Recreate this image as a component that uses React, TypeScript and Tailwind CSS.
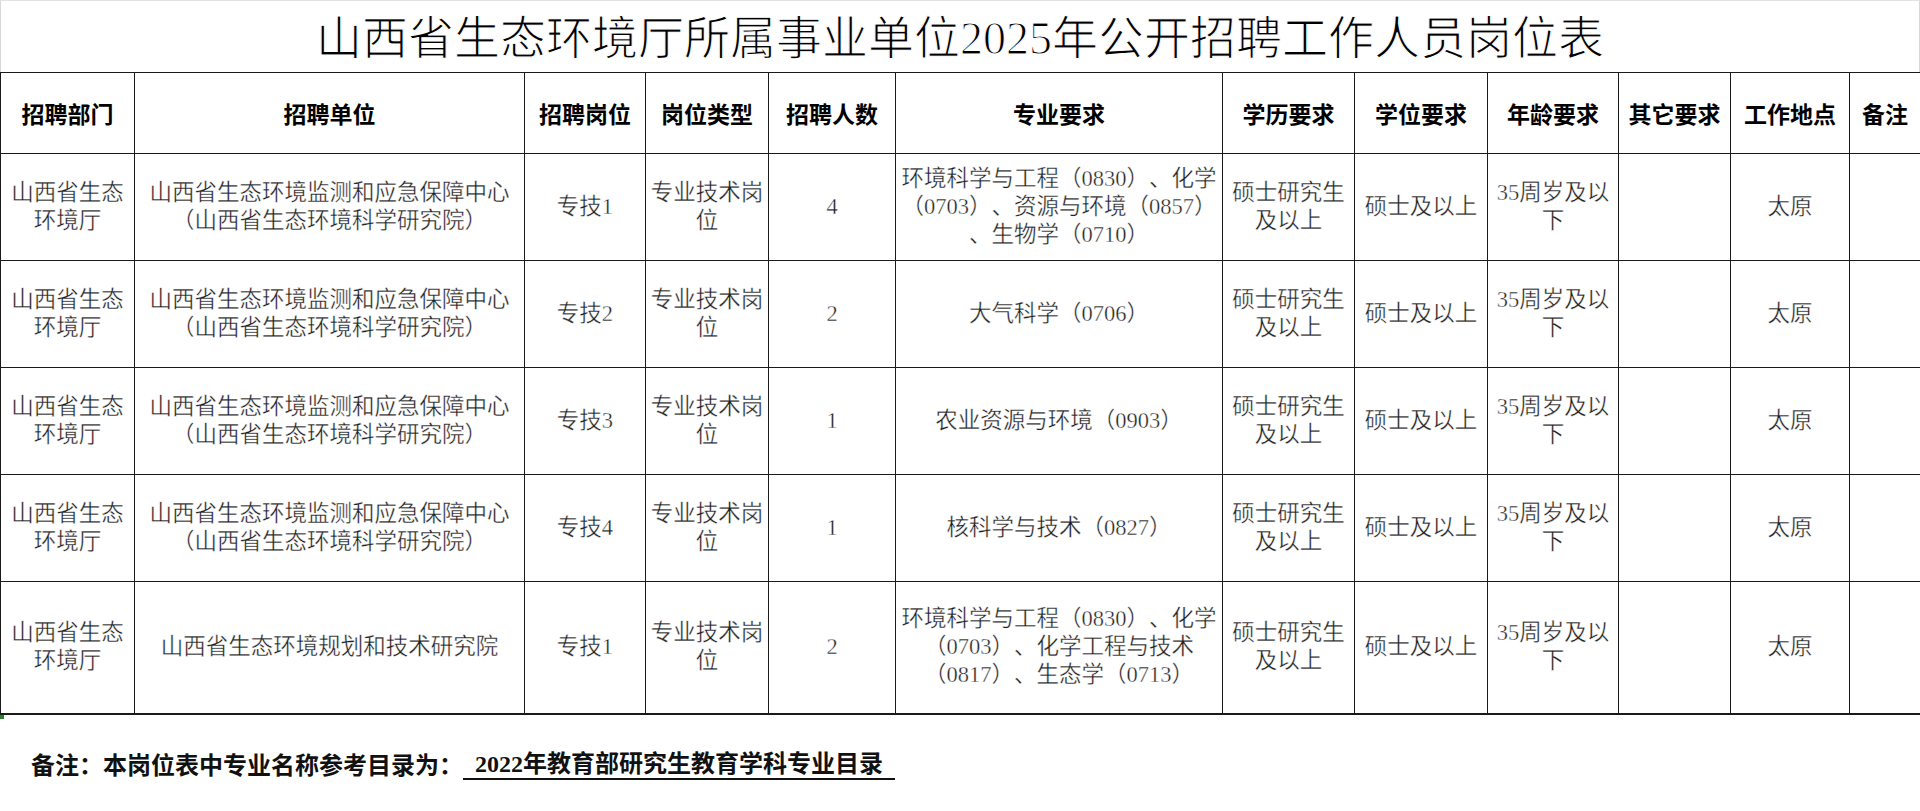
import React from "react";

type Row = {
  dept: string[];
  unit: string[];
  post: string;
  type: string[];
  n: string;
  major: string[];
  edu: string[];
  deg: string;
  age: string[];
  other: string;
  loc: string;
  note: string;
};

const base = {
  dept: ["山西省生态", "环境厅"],
  unit: ["山西省生态环境监测和应急保障中心", "（山西省生态环境科学研究院）"],
  type: ["专业技术岗", "位"],
  edu: ["硕士研究生", "及以上"],
  deg: "硕士及以上",
  age: ["35周岁及以", "下"],
  other: "",
  loc: "太原",
  note: "",
};

const rows: Row[] = [
  {
    ...base,
    post: "专技1",
    n: "4",
    major: ["环境科学与工程（0830）、化学", "（0703）、资源与环境（0857）", "、生物学（0710）"],
  },
  { ...base, post: "专技2", n: "2", major: ["大气科学（0706）"] },
  { ...base, post: "专技3", n: "1", major: ["农业资源与环境（0903）"] },
  { ...base, post: "专技4", n: "1", major: ["核科学与技术（0827）"] },
  {
    ...base,
    unit: ["山西省生态环境规划和技术研究院"],
    post: "专技1",
    n: "2",
    major: ["环境科学与工程（0830）、化学", "（0703）、化学工程与技术", "（0817）、生态学（0713）"],
  },
];

const headers = [
  "招聘部门",
  "招聘单位",
  "招聘岗位",
  "岗位类型",
  "招聘人数",
  "专业要求",
  "学历要求",
  "学位要求",
  "年龄要求",
  "其它要求",
  "工作地点",
  "备注",
];

const widths = [134, 390, 121, 123, 127, 327, 132, 133, 131, 112, 119, 71];

const serif = { fontFamily: '"Liberation Serif", "Noto Sans CJK SC", serif' };
const sans = { fontFamily: '"Noto Sans CJK SC", "Liberation Sans", sans-serif' };

function Lines({ lines }: { lines: string[] }) {
  return (
    <div className="flex flex-col items-center">
      {lines.map((l, i) => (
        <div key={i} className="whitespace-nowrap">
          {l}
        </div>
      ))}
    </div>
  );
}

export default function App() {
  return (
    <div className="w-[1920px] h-[811px] bg-white overflow-hidden border-t border-[#e2e2e2] [text-spacing-trim:space-all]">
      <div
        className="h-[71px] flex items-center justify-center text-[46px] font-normal text-black border-l border-r border-[#d8d8d8] pt-[4px] [-webkit-text-stroke:1.1px_#fff]"
        style={serif}
      >
        山西省生态环境厅所属事业单位2025年公开招聘工作人员岗位表
      </div>
      <table className="w-[1920px] table-fixed border-collapse">
        <colgroup>
          {widths.map((w, i) => (
            <col key={i} style={{ width: w }} />
          ))}
        </colgroup>
        <thead>
          <tr className="h-[81px]">
            {headers.map((h) => (
              <th
                key={h}
                className="border border-[#1a1a1a] text-[23px] font-bold text-black text-center align-middle p-0 whitespace-nowrap"
                style={sans}
              >
                {h}
              </th>
            ))}
          </tr>
        </thead>
        <tbody>
          {rows.map((r, i) => (
            <tr key={i} className={i === 4 ? "h-[132px]" : "h-[107px]"}>
              {[
                r.dept,
                r.unit,
                [r.post],
                r.type,
                [r.n],
                r.major,
                r.edu,
                [r.deg],
                r.age,
                r.other ? [r.other] : [],
                [r.loc],
                r.note ? [r.note] : [],
              ].map((c, j) => (
                <td
                  key={j}
                  className={`border border-[#1a1a1a] text-[22.5px] leading-[28px] text-[#1f1f1f] font-normal text-center align-middle p-0 [-webkit-text-stroke:0.35px_#fff] ${
                    i === 4 ? "border-b-2" : ""
                  }`}
                  style={serif}
                >
                  <Lines lines={c} />
                </td>
              ))}
            </tr>
          ))}
        </tbody>
      </table>
      <div className="relative h-[97px] flex items-center pl-[31px] pt-[2px]">
        <div className="absolute left-0 top-0 w-[4px] h-[4px] bg-[#2e7d32]" />
        <span className="text-[24px] font-bold text-[#111]" style={sans}>
          备注：本岗位表中专业名称参考目录为：
        </span>
        <span
          className="text-[24px] font-bold text-[#111] underline underline-offset-[6px] decoration-[1.5px] whitespace-pre"
          style={serif}
        >
          {"  2022年教育部研究生教育学科专业目录  "}
        </span>
      </div>
    </div>
  );
}
